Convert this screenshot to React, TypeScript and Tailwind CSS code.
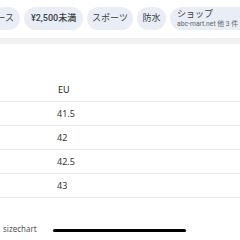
import React from "react";

const Chip = ({ children, className = "" }: { children: React.ReactNode; className?: string }) => (
  <div className={`flex h-[23px] shrink-0 items-center whitespace-nowrap rounded-[12px] bg-[#e9eef6] px-[7px] text-[9px] text-[#3c4043] ${className}`}>
    {children}
  </div>
);

export default function App() {
  const rows = ["41.5", "42", "42.5", "43"];
  return (
    <div
      className="relative h-[240px] w-[240px] overflow-hidden bg-white"
      style={{ fontFamily: 'Roboto, "Noto Sans CJK JP", sans-serif' }}
    >
      <div className="flex h-[38px] items-start gap-[4px] pt-[7px]">
        <Chip className="ml-[-8px] w-[28px] justify-end pr-[6px]">ース</Chip>
        <Chip className="w-[59px] justify-center font-medium">¥2,500未満</Chip>
        <Chip className="w-[46px] justify-center">スポーツ</Chip>
        <Chip className="w-[29px] justify-center">防水</Chip>
        <div className="flex h-[23px] w-[80px] shrink-0 flex-col justify-center whitespace-nowrap rounded-[12px] bg-[#e9eef6] pl-[7px] text-[#3c4043]">
          <div className="flex items-center leading-[11px]">
            <span className="text-[9px]">ショップ</span>
            <span className="ml-[38px] text-[5px]">▼</span>
          </div>
          <div className="text-[6.8px] leading-[8px] text-[#5f6368]">abc-mart.net 他 3 件</div>
        </div>
      </div>
      <div className="h-[6px] bg-[#eef0f2]" />
      <div className="h-[34px]" />
      <div className="flex h-[24px] items-center border-b border-[#ebebeb] pl-[58px] text-[9px] text-[#222]" style={{ fontFamily: '"Noto Sans", sans-serif' }}>
        EU
      </div>
      {rows.map((r) => (
        <div
          key={r}
          className="flex h-[24px] items-center border-b border-[#ebebeb] pl-[57px] text-[9px] text-[#333]"
          style={{ fontFamily: '"Noto Sans", sans-serif' }}
        >
          {r}
        </div>
      ))}
      <div className="mt-[25px] flex items-center">
        <span className="pl-[3px] text-[8px] text-[#555]" style={{ fontFamily: '"Noto Sans", sans-serif' }}>sizechart</span>
        <div className="ml-[16px] mt-[3px] h-[3px] w-[133px] rounded-full bg-black" />
      </div>
    </div>
  );
}
